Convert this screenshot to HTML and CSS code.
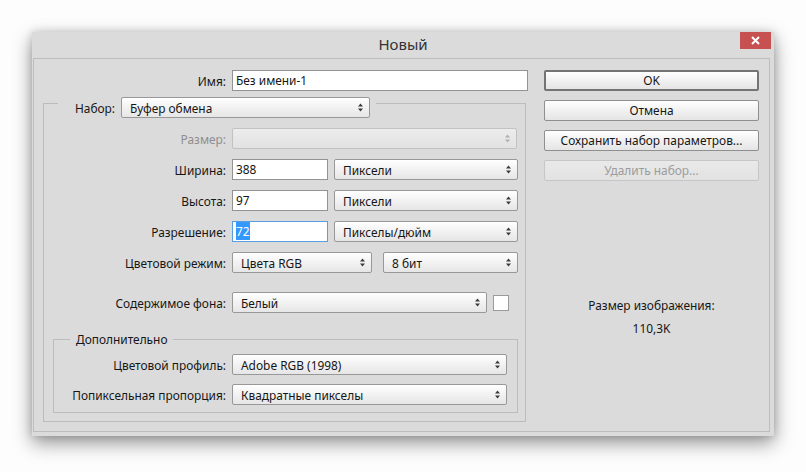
FILE: index.html
```html
<!DOCTYPE html>
<html lang="ru">
<head>
<meta charset="utf-8">
<title>Новый</title>
<link rel="stylesheet" href="styles.css">
</head>
<body>
<div class="window">
  <div class="titlebar">
    <span></span>
    <div class="title">Новый</div>
    <div class="close"><svg width="9" height="9" viewBox="0 0 9 9"><path d="M1 1L8 8M8 1L1 8" stroke="#fff" stroke-width="2" fill="none"/></svg></div>
  </div>
  <div class="content">
    <div class="left">
      <div class="row">
        <div class="label lw-top">Имя:</div>
        <div class="field w-296">Без имени-1</div>
      </div>
      <div class="group">
        <div class="group-head">
          <div class="label lw-head">Набор:</div>
          <div class="select w-249"><span>Буфер обмена</span><svg class="arr" width="5" height="9" viewBox="0 0 5 9"><path d="M0 3.5L2.5 0.5L5 3.5ZM0 5.5L2.5 8.5L5 5.5Z"/></svg></div>
        </div>
        <div class="row r1">
          <div class="label lw-grp disabled">Размер:</div>
          <div class="select disabled-sel w-285"><span></span><svg class="arr" width="5" height="9" viewBox="0 0 5 9"><path d="M0 3.5L2.5 0.5L5 3.5ZM0 5.5L2.5 8.5L5 5.5Z"/></svg></div>
        </div>
        <div class="row r">
          <div class="label lw-grp">Ширина:</div>
          <div class="field w-96">388</div>
          <div class="select w-184 gap6"><span>Пиксели</span><svg class="arr" width="5" height="9" viewBox="0 0 5 9"><path d="M0 3.5L2.5 0.5L5 3.5ZM0 5.5L2.5 8.5L5 5.5Z"/></svg></div>
        </div>
        <div class="row r">
          <div class="label lw-grp">Высота:</div>
          <div class="field w-96">97</div>
          <div class="select w-184 gap6"><span>Пиксели</span><svg class="arr" width="5" height="9" viewBox="0 0 5 9"><path d="M0 3.5L2.5 0.5L5 3.5ZM0 5.5L2.5 8.5L5 5.5Z"/></svg></div>
        </div>
        <div class="row r">
          <div class="label lw-grp">Разрешение:</div>
          <div class="field focus w-96"><span class="selected">72</span></div>
          <div class="select w-184 gap6"><span>Пикселы/дюйм</span><svg class="arr" width="5" height="9" viewBox="0 0 5 9"><path d="M0 3.5L2.5 0.5L5 3.5ZM0 5.5L2.5 8.5L5 5.5Z"/></svg></div>
        </div>
        <div class="row r">
          <div class="label lw-grp">Цветовой режим:</div>
          <div class="select w-140"><span>Цвета RGB</span><svg class="arr" width="5" height="9" viewBox="0 0 5 9"><path d="M0 3.5L2.5 0.5L5 3.5ZM0 5.5L2.5 8.5L5 5.5Z"/></svg></div>
          <div class="select w-135 gap11"><span>8 бит</span><svg class="arr" width="5" height="9" viewBox="0 0 5 9"><path d="M0 3.5L2.5 0.5L5 3.5ZM0 5.5L2.5 8.5L5 5.5Z"/></svg></div>
        </div>
        <div class="row r-bg">
          <div class="label lw-grp">Содержимое фона:</div>
          <div class="select w-255"><span>Белый</span><svg class="arr" width="5" height="9" viewBox="0 0 5 9"><path d="M0 3.5L2.5 0.5L5 3.5ZM0 5.5L2.5 8.5L5 5.5Z"/></svg></div>
          <div class="swatch"></div>
        </div>
        <div class="subgroup">
          <div class="sub-title">Дополнительно</div>
          <div class="row r-s1">
            <div class="label lw-sub">Цветовой профиль:</div>
            <div class="select w-275"><span>Adobe RGB (1998)</span><svg class="arr" width="5" height="9" viewBox="0 0 5 9"><path d="M0 3.5L2.5 0.5L5 3.5ZM0 5.5L2.5 8.5L5 5.5Z"/></svg></div>
          </div>
          <div class="row r-s2">
            <div class="label lw-sub">Попиксельная пропорция:</div>
            <div class="select w-275"><span>Квадратные пикселы</span><svg class="arr" width="5" height="9" viewBox="0 0 5 9"><path d="M0 3.5L2.5 0.5L5 3.5ZM0 5.5L2.5 8.5L5 5.5Z"/></svg></div>
          </div>
        </div>
      </div>
    </div>
    <div class="right">
      <div class="btn default">OK</div>
      <div class="btn">Отмена</div>
      <div class="btn">Сохранить набор параметров...</div>
      <div class="btn btn-disabled">Удалить набор...</div>
      <div class="info">
        <div>Размер изображения:</div>
        <div>110,3K</div>
      </div>
    </div>
  </div>
</div>
</body>
</html>
```
FILE: styles.css
```css
* { box-sizing: border-box; }
html, body { margin: 0; padding: 0; }
body {
  background: #fdfdfd;
  font-family: "Noto Sans", "DejaVu Sans", sans-serif;
  font-size: 11.9px;
  color: #161616;
  padding: 32px 0 0 32px;
  width: 806px;
  height: 472px;
  overflow: hidden;
}
.window {
  width: 742px;
  height: 404px;
  background: #dbdbdb;
  display: flex;
  flex-direction: column;
  padding: 0 4px 4px 1px;
  box-shadow: 0 7px 18px rgba(0,0,0,0.42), 0 0 8px rgba(0,0,0,0.15);
}
.titlebar {
  height: 26px;
  margin-left: -1px;
  margin-right: -4px;
  display: grid;
  grid-template-columns: 1fr auto 1fr;
  align-items: start;
}
.title {
  font-size: 15px;
  color: #333;
  line-height: 24px;
}
.close {
  justify-self: end;
  margin-right: 3px;
  width: 31px;
  height: 17px;
  background: #c75050;
  display: flex;
  align-items: center;
  justify-content: center;
}
.close svg { display: block; }
.content {
  flex: 1;
  border: 1px solid #bdbdbd;
  display: flex;
}
.left {
  width: 494px;
  padding-top: 11px;
}
.row {
  display: flex;
  align-items: center;
  height: 21px;
}
.label {
  text-align: right;
  padding-right: 6px;
  white-space: nowrap;
  flex: none;
}
.lw-top { width: 198px; }
.lw-grp { width: 188px; }
.lw-sub { width: 178px; }
.lw-head { width: 63px; }
.disabled { color: #8e8e8e; }
.field {
  height: 21px;
  background: #fff;
  border: 1px solid #939393;
  padding: 0 3px;
  line-height: 19px;
  white-space: nowrap;
  flex: none;
}
.field.focus { border-color: #5b9ee0; }
.selected {
  background: #3399ff;
  color: #fff;
  padding: 1px 0;
}
.select {
  height: 21px;
  border: 1px solid #989898;
  border-radius: 2px;
  background: linear-gradient(#ffffff, #f3f3f3 45%, #e6e6e6);
  display: flex;
  align-items: center;
  justify-content: space-between;
  padding: 0 6px 0 8px;
  white-space: nowrap;
  flex: none;
}
.select .arr { fill: #3a3a3a; display: block; }
.disabled-sel {
  border-color: #c2c2c2;
  background: linear-gradient(#ececec, #e2e2e2);
}
.disabled-sel .arr { fill: #b0b0b0; }
.gap6 { margin-left: 6px; }
.gap11 { margin-left: 11px; }
.w-296 { width: 296px; }
.w-249 { width: 249px; }
.w-285 { width: 285px; }
.w-96 { width: 96px; }
.w-184 { width: 184px; }
.w-140 { width: 140px; }
.w-135 { width: 135px; }
.w-255 { width: 255px; }
.w-275 { width: 275px; }
.swatch {
  width: 16px;
  height: 16px;
  margin-left: 6px;
  background: #fff;
  border: 1px solid #9a9a9a;
}
.group {
  margin: 12px 0 0 9px;
  width: 483px;
  border: 1px solid #bcbcbc;
  padding-bottom: 8px;
}
.group-head {
  display: flex;
  align-items: center;
  margin: -7px 0 0 14px;
  width: fit-content;
  background: #dbdbdb;
  padding-right: 6px;
}
.r1 { margin-top: 10px; }
.r { margin-top: 10px; }
.r-bg { margin-top: 19px; }
.subgroup {
  margin: 26px 7px 0 9px;
  border: 1px solid #bcbcbc;
  padding-bottom: 7px;
}
.sub-title {
  margin: -8px 0 0 16px;
  padding: 0 6px;
  width: fit-content;
  background: #dbdbdb;
  line-height: 15px;
}
.r-s1 { margin-top: 7px; }
.r-s2 { margin-top: 9px; }
.right {
  margin-left: 16px;
  width: 215px;
  padding-top: 11px;
  display: flex;
  flex-direction: column;
  gap: 9px;
}
.btn {
  height: 21px;
  border: 1px solid #8f8f8f;
  border-radius: 2px;
  background: linear-gradient(#ffffff, #f1f1f1 50%, #e5e5e5);
  text-align: center;
  line-height: 19px;
  white-space: nowrap;
}
.btn.default {
  border: 2px solid #747474;
  line-height: 17px;
}
.btn-disabled {
  border-color: #c6c6c6;
  color: #9c9c9c;
  background: linear-gradient(#e9e9e9, #e2e2e2);
}
.info {
  margin-top: 108px;
  text-align: center;
  line-height: 15px;
  display: flex;
  flex-direction: column;
  gap: 8px;
}
```
